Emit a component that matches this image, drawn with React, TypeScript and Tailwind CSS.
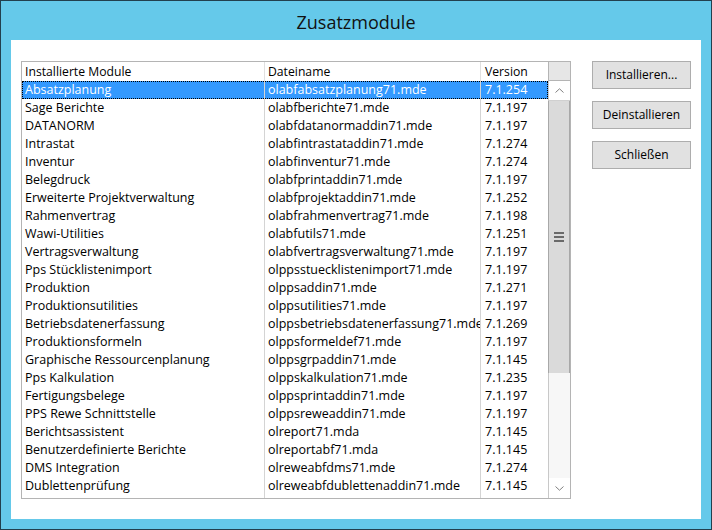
import React from 'react';

type ModuleRow = [string, string, string];

const modules: ModuleRow[] = [
  ['Absatzplanung', 'olabfabsatzplanung71.mde', '7.1.254'],
  ['Sage Berichte', 'olabfberichte71.mde', '7.1.197'],
  ['DATANORM', 'olabfdatanormaddin71.mde', '7.1.197'],
  ['Intrastat', 'olabfintrastataddin71.mde', '7.1.274'],
  ['Inventur', 'olabfinventur71.mde', '7.1.274'],
  ['Belegdruck', 'olabfprintaddin71.mde', '7.1.197'],
  ['Erweiterte Projektverwaltung', 'olabfprojektaddin71.mde', '7.1.252'],
  ['Rahmenvertrag', 'olabfrahmenvertrag71.mde', '7.1.198'],
  ['Wawi-Utilities', 'olabfutils71.mde', '7.1.251'],
  ['Vertragsverwaltung', 'olabfvertragsverwaltung71.mde', '7.1.197'],
  ['Pps Stücklistenimport', 'olppsstuecklistenimport71.mde', '7.1.197'],
  ['Produktion', 'olppsaddin71.mde', '7.1.271'],
  ['Produktionsutilities', 'olppsutilities71.mde', '7.1.197'],
  ['Betriebsdatenerfassung', 'olppsbetriebsdatenerfassung71.mde', '7.1.269'],
  ['Produktionsformeln', 'olppsformeldef71.mde', '7.1.197'],
  ['Graphische Ressourcenplanung', 'olppsgrpaddin71.mde', '7.1.145'],
  ['Pps Kalkulation', 'olppskalkulation71.mde', '7.1.235'],
  ['Fertigungsbelege', 'olppsprintaddin71.mde', '7.1.197'],
  ['PPS Rewe Schnittstelle', 'olppsreweaddin71.mde', '7.1.197'],
  ['Berichtsassistent', 'olreport71.mda', '7.1.145'],
  ['Benutzerdefinierte Berichte', 'olreportabf71.mda', '7.1.145'],
  ['DMS Integration', 'olreweabfdms71.mde', '7.1.274'],
  ['Dublettenprüfung', 'olreweabfdublettenaddin71.mde', '7.1.145'],
];

const font = { fontFamily: '"Open Sans", "Noto Sans", sans-serif' };

const Chevron = ({ up }: { up?: boolean }) => (
  <svg width="9" height="5" viewBox="0 0 9 5" className={up ? '' : 'rotate-180'}>
    <path d="M0.5 4.5 L4.5 0.8 L8.5 4.5" fill="none" stroke="#808080" strokeWidth="1" />
  </svg>
);

const WinButton = ({ label }: { label: string }) => (
  <button className="w-[99px] h-[28px] bg-[#e1e1e1] border border-[#adadad] text-[12px] text-black flex items-center justify-center">
    {label}
  </button>
);

export default function App() {
  return (
    <div className="w-[712px] h-[530px] bg-[#65c9ea] border border-[#22404e] flex flex-col" style={font}>
      {/* Title bar */}
      <div className="h-[39px] flex items-center justify-center text-[18px] text-[#111] pt-[3px]">
        Zusatzmodule
      </div>

      <div className="flex-1 mx-[10px] mb-[10px] bg-white flex items-start pl-[10px] pt-[21px]">
        {/* List view */}
        <div className="w-[550px] h-[438px] border border-[#b4b4b4] flex flex-col text-[12.5px] text-black">
          {/* Header */}
          <div className="h-[19px] flex leading-[19px] shrink-0 text-[12.2px]">
            <div className="w-[243px] border-r border-[#e0e0e0] pl-[3px]">Installierte Module</div>
            <div className="w-[216px] border-r border-[#e0e0e0] pl-[3px]">Dateiname</div>
            <div className="w-[67px] pl-[4px]">Version</div>
            <div className="w-[22px] bg-[#e6e6e6] border border-[#b4b4b4] border-t-0 border-r-0" />
          </div>

          <div className="flex flex-1 min-h-0">
            {/* Rows */}
            <div className="w-[526px] overflow-hidden flex flex-col">
              {modules.map((m, i) => {
                const sel = i === 0;
                return (
                  <div
                    key={i}
                    className={`h-[18px] shrink-0 flex leading-[18px] whitespace-nowrap ${
                      sel ? 'bg-[#3399ff] text-white [outline:1px_dotted_#000] [outline-offset:-1px]' : ''
                    }`}
                  >
                    <div className="w-[243px] border-r border-[#d4d4d4] pl-[3px] overflow-hidden">{m[0]}</div>
                    <div className="w-[216px] border-r border-[#d4d4d4] pl-[3px] overflow-hidden">{m[1]}</div>
                    <div className="w-[67px] pl-[4px] overflow-hidden">{m[2]}</div>
                  </div>
                );
              })}
              {/* row below the visible area, only its column lines show */}
              <div className="flex-1 flex">
                <div className="w-[243px] border-r border-[#d4d4d4]" />
                <div className="w-[216px] border-r border-[#d4d4d4]" />
              </div>
            </div>

            {/* Scrollbar */}
            <div className="w-[22px] border-l border-[#c8c8c8] flex flex-col bg-[#f7f7f7]">
              <div className="h-[20px] bg-white flex items-center justify-center border-b border-[#d0d0d0]">
                <Chevron up />
              </div>
              <div className="h-[272px] bg-[#dadada] border-x border-[#a8a8a8] flex flex-col items-center justify-center gap-[2px] -ml-px w-[22px]">
                <div className="w-[10px] h-[2px] bg-[#6a6a6a]" />
                <div className="w-[10px] h-[2px] bg-[#6a6a6a]" />
                <div className="w-[10px] h-[2px] bg-[#6a6a6a]" />
              </div>
              <div className="flex-1" />
              <div className="h-[20px] bg-white flex items-center justify-center">
                <Chevron />
              </div>
            </div>
          </div>
        </div>

        {/* Buttons */}
        <div className="ml-[21px] flex flex-col gap-[12px]">
          <WinButton label="Installieren..." />
          <WinButton label="Deinstallieren" />
          <WinButton label="Schließen" />
        </div>
      </div>
    </div>
  );
}
